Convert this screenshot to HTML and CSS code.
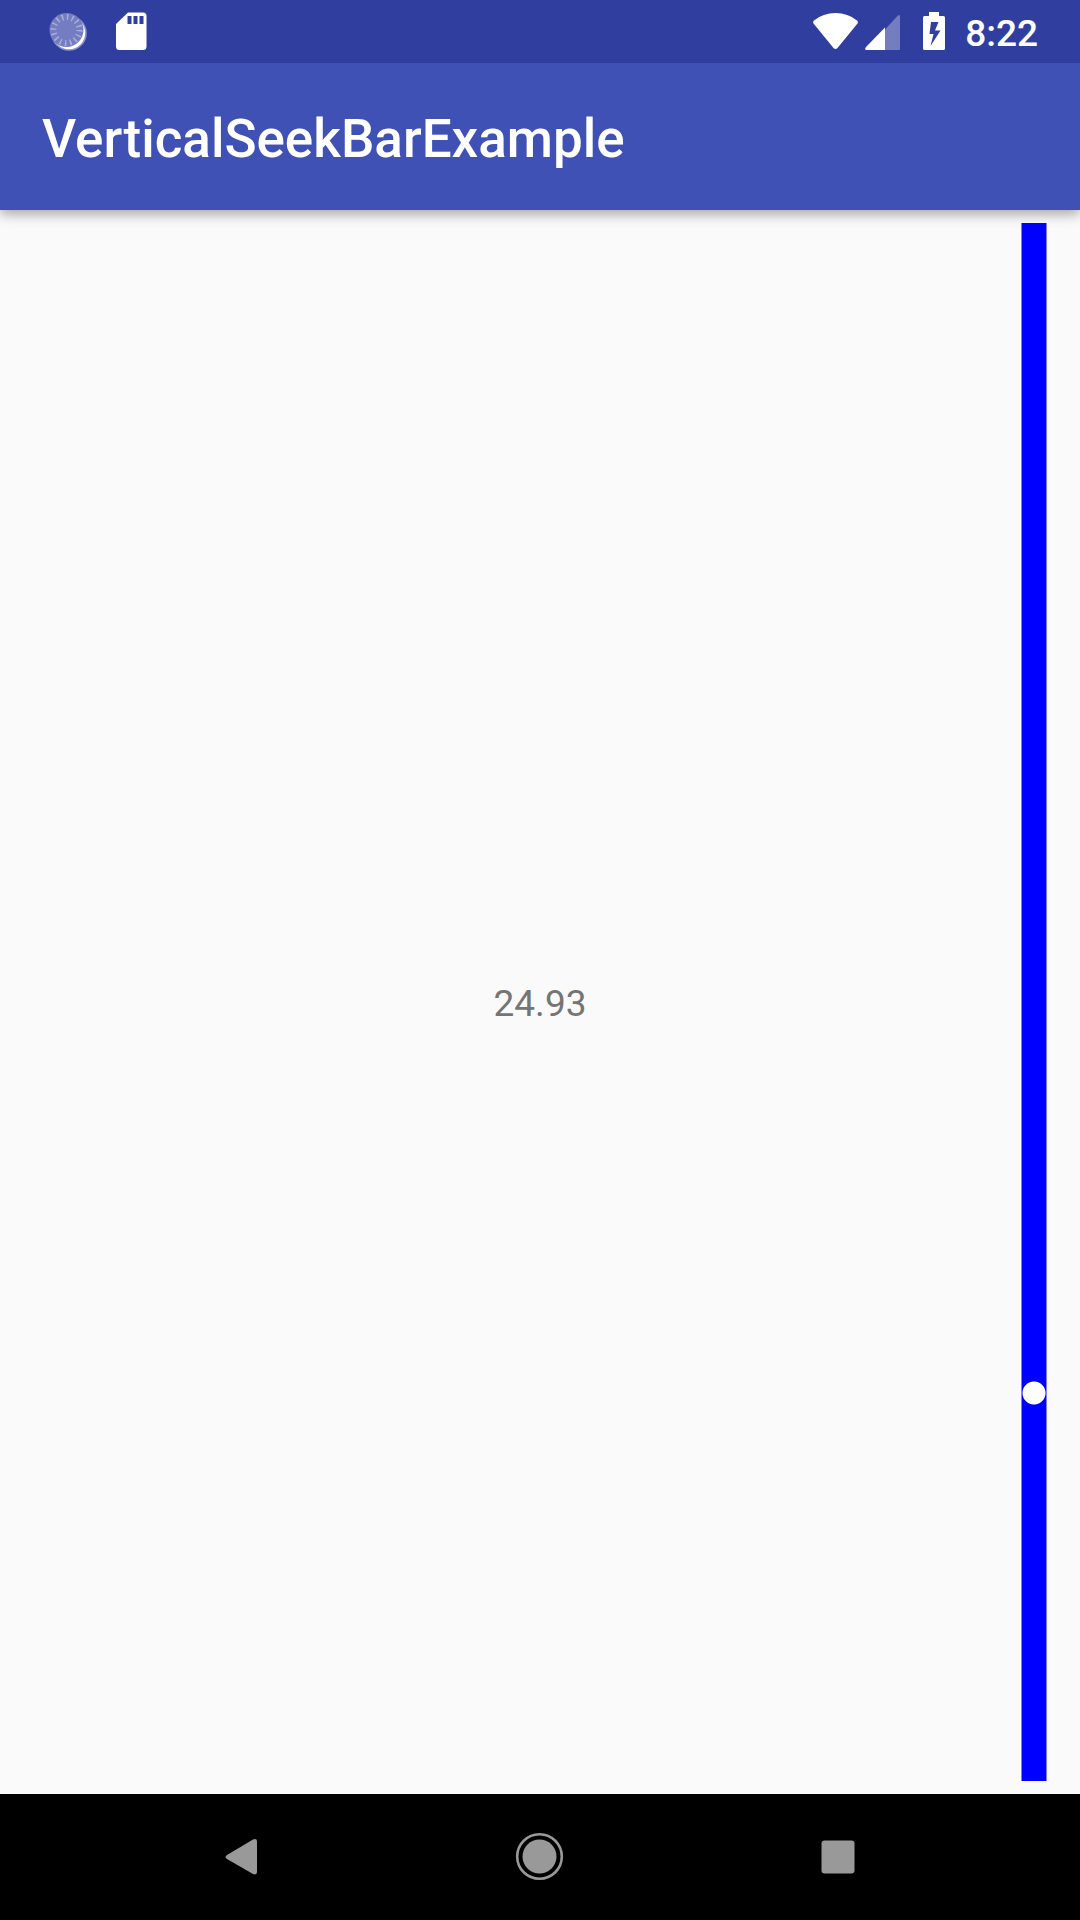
FILE: index.html
```html
<!DOCTYPE html>
<html lang="en">
<head>
<meta charset="utf-8">
<meta name="viewport" content="width=device-width, initial-scale=1">
<title>VerticalSeekBarExample</title>
<link rel="stylesheet" href="styles.css">
</head>
<body>
<div class="screen">
  <div class="status-bar">
    <div class="status-group notifications">
      <svg class="icon-sync" viewBox="0 0 40 40" aria-hidden="true">
        <circle cx="21" cy="21" r="17" fill="#fff" stroke="#8b92cc" stroke-width="1.6"/>
        <circle cx="18.500" cy="18" r="17" fill="#747dbf"/>
        <circle cx="18.500" cy="18" r="13" fill="none" stroke="#a9aedb" stroke-width="6" stroke-dasharray="1.5 3.605"/>
      </svg>
      <svg class="icon-sd" viewBox="0 0 32 40" aria-hidden="true">
        <path fill="#fff" fill-rule="evenodd" d="M12 .5H27Q30.500 .5 30.500 4V34.500Q30.500 38 27 38H3.500Q0 38 0 34.500V12ZM11.500 4v8h4V4Zm6 0v8h4V4Zm6 0v8h4V4Z"/>
      </svg>
    </div>
    <div class="status-group indicators">
      <svg class="icon-wifi" viewBox="0 0 46 40" aria-hidden="true">
        <path fill="#fff" d="M1 8.500Q10 1 22.500 1T44 8.500Q45.500 10 44.500 11.500L24.500 36Q22.500 38 20.500 36L.5 11.500Q-.5 10 1 8.500Z"/>
      </svg>
      <svg class="icon-signal" viewBox="0 0 36 40" aria-hidden="true">
        <path fill="#747dbf" d="M20 17.500L32 4.500Q35 1.500 35 5V37Q35 38 34 38H20Z"/>
        <path fill="#fff" d="M20 15.500V38H1.500Q-1 38 1 35Z"/>
      </svg>
      <svg class="icon-battery" viewBox="0 0 22 40" aria-hidden="true">
        <path fill="#fff" fill-rule="evenodd" d="M6 0H16V4H20.500Q22 4 22 5.500V36.500Q22 38 20.500 38H1.500Q0 38 0 36.500V5.500Q0 4 1.500 4H6ZM8 10L6.500 22H10.500L7.500 34L17.500 18.500H12L15.500 10Z"/>
      </svg>
      <time class="clock" datetime="08:22">8:22</time>
    </div>
  </div>
  <header class="app-bar"><h1 class="title">VerticalSeekBarExample</h1></header>
  <main class="content">
    <output class="value" id="value" for="seek">24.93</output>
    <input class="seek-bar" id="seek" type="range" min="0" max="100" step="0.01" value="24.93" aria-label="Value">
  </main>
  <nav class="nav-bar" aria-label="System navigation">
    <button class="nav-button" type="button" aria-label="Back">
      <svg class="nav-icon" viewBox="0 0 48 48" aria-hidden="true"><path fill="#999" d="M9 22L35 6.500Q39 5 39 8.500V39Q39 42.500 35 41L9 26Q6 24 9 22Z"/></svg>
    </button>
    <button class="nav-button" type="button" aria-label="Home">
      <svg class="nav-icon" viewBox="0 0 48 48" aria-hidden="true"><circle cx="23.500" cy="23.500" r="22.300" fill="none" stroke="#999" stroke-width="2.600"/><circle cx="23.500" cy="23.500" r="17" fill="#999"/></svg>
    </button>
    <button class="nav-button" type="button" aria-label="Recent apps">
      <svg class="nav-icon" viewBox="0 0 48 48" aria-hidden="true"><rect x="7.500" y="7.500" width="33" height="33" rx="3" fill="#999"/></svg>
    </button>
  </nav>
</div>
<script src="script.js"></script>
</body>
</html>
```
FILE: styles.css
```css
* {
  box-sizing: border-box;
}

body {
  margin: 0;
  font-family: Roboto, sans-serif;
}

.screen {
  display: flex;
  flex-direction: column;
  min-height: 100vh;
  background: #fafafa;
}

.status-bar {
  display: flex;
  justify-content: space-between;
  height: 63px;
  padding: 0 42px 0 48px;
  background: #303f9f;
  z-index: 2;
}

.status-group {
  display: flex;
  padding-top: 12px;
}

.status-group svg {
  height: 40px;
}

.notifications {
  gap: 28px;
}

.icon-sync {
  width: 40px;
}

.icon-sd {
  width: 32px;
}

.icon-wifi {
  width: 46px;
  margin-right: 6px;
}

.icon-signal {
  width: 36px;
  margin-right: 22px;
}

.icon-battery {
  width: 22px;
  margin-right: 20px;
}

.clock {
  color: #fff;
  font-size: 37px;
  font-weight: 500;
  line-height: 44px;
}

.app-bar {
  display: flex;
  align-items: center;
  height: 147px;
  padding: 4px 42px 0;
  background: #3f51b5;
  box-shadow: 0 4px 12px rgba(0, 0, 0, 0.35);
  z-index: 1;
}

.title {
  margin: 0;
  color: #fff;
  font-size: 53px;
  font-weight: 500;
  line-height: 64px;
}

.content {
  position: relative;
  display: flex;
  flex: 1;
  align-items: center;
  justify-content: center;
}

.value {
  padding-top: 4px;
  color: #757575;
  font-size: 37px;
  line-height: 44px;
}

.seek-bar {
  position: absolute;
  top: 0;
  right: 33px;
  width: 26px;
  height: 100%;
  margin: 0;
  appearance: none;
  writing-mode: vertical-lr;
  direction: rtl;
  background: linear-gradient(to right, #7d7dfd 1px, #00f 1px 25px, #7d7dfd 25px) center / 100% calc(100% - 26px) no-repeat;
}

.seek-bar::-webkit-slider-thumb {
  appearance: none;
  width: 26px;
  height: 26px;
  border: 0;
  background: radial-gradient(circle, #fff 11px, transparent 12px);
}

.nav-bar {
  display: flex;
  justify-content: center;
  gap: 114px;
  height: 126px;
  background: #000;
}

.nav-button {
  display: flex;
  align-items: center;
  justify-content: center;
  width: 184px;
  padding: 0;
  border: 0;
  background: none;
}

.nav-icon {
  width: 48px;
  height: 48px;
  overflow: visible;
}
```
FILE: script.js
```js
const seek = document.getElementById("seek");
const value = document.getElementById("value");

seek.addEventListener("input", () => {
  value.textContent = Number(seek.value).toFixed(2);
});
```
